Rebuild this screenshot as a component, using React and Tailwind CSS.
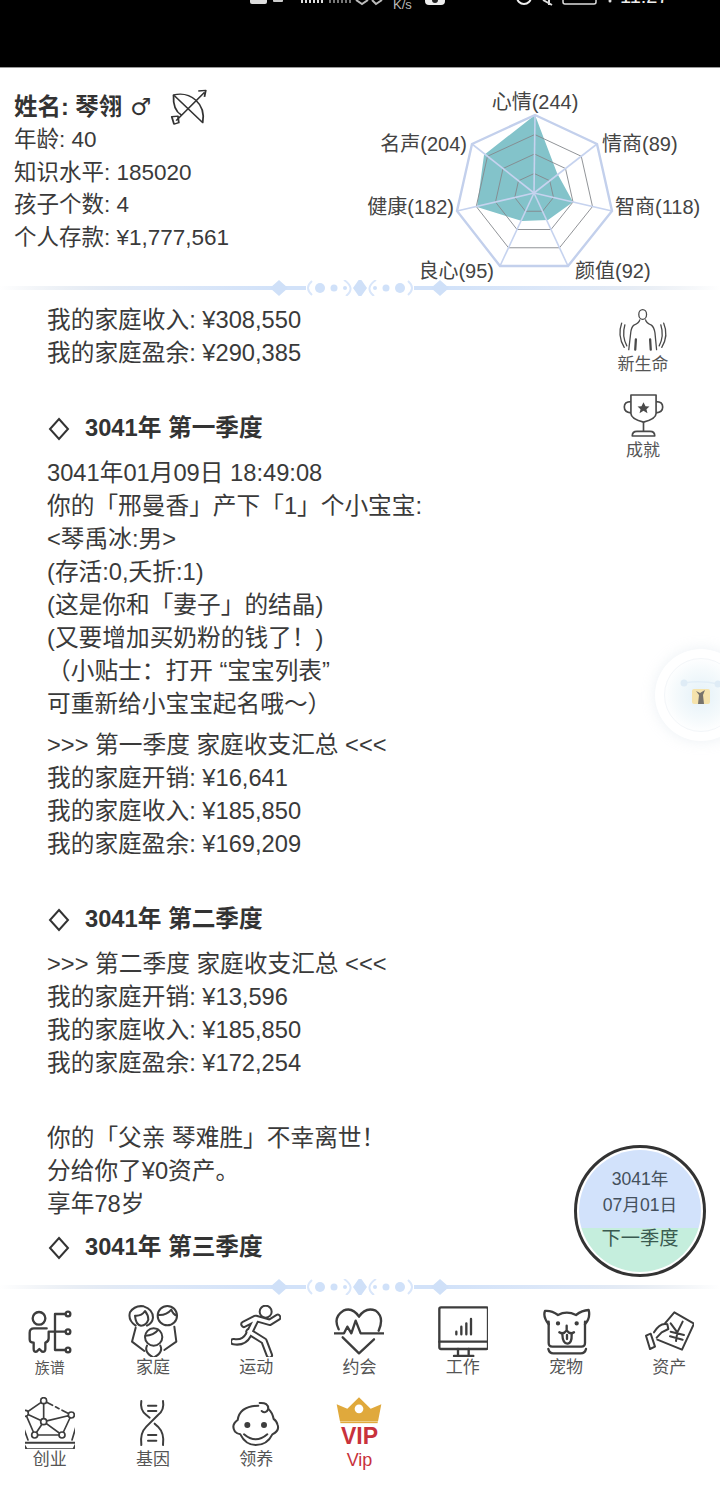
import React from 'react';

const LABELS = [
  { text: '心情(244)', x: 535, y: 109, anchor: 'middle' },
  { text: '情商(89)', x: 602, y: 151, anchor: 'start' },
  { text: '智商(118)', x: 615, y: 214, anchor: 'start' },
  { text: '颜值(92)', x: 575, y: 278, anchor: 'start' },
  { text: '良心(95)', x: 494, y: 278, anchor: 'end' },
  { text: '健康(182)', x: 454, y: 214, anchor: 'end' },
  { text: '名声(204)', x: 467, y: 151, anchor: 'end' },
];

const OUTER = [[535, 115], [597, 144], [612, 211], [568, 266], [500, 266], [457, 211], [472, 144]];
const CENTER = [534, 193];

const ringPoints = (k) =>
  OUTER.map(([x, y]) => `${CENTER[0] + (x - CENTER[0]) * k},${CENTER[1] + (y - CENTER[1]) * k}`).join(' ');

const Radar = () => (
  <svg viewBox="360 68 360 212" width="360" height="212" className="shrink-0 overflow-visible">
    <polygon points="535,115 557,173 573,202 548,220 522,221 477,207 484,155" fill="#83c3ca" />
    {[0.25, 0.5, 0.75].map((k) => (
      <polygon key={k} points={ringPoints(k)} fill="none" stroke="#85888c" strokeWidth="0.9" />
    ))}
    {OUTER.map(([x, y]) => (
      <line key={x} x1={CENTER[0]} y1={CENTER[1]} x2={x} y2={y} stroke="#c6d3ef" strokeWidth="1.6" />
    ))}
    <polygon points={ringPoints(1)} fill="none" stroke="#c3d0ec" strokeWidth="2.4" />
    {LABELS.map((l) => (
      <text key={l.text} x={l.x} y={l.y} textAnchor={l.anchor} fontSize="20" fill="#444">
        {l.text}
      </text>
    ))}
  </svg>
);

const Bracket = ({ flip }) => (
  <g transform={flip ? 'translate(720 0) scale(-1 1)' : undefined}>
    <circle cx="320" cy="8" r="5" fill="#d0e1f9" />
    <circle cx="334" cy="8" r="3.5" fill="#d0e1f9" />
    <circle cx="345" cy="8" r="2" fill="#d0e1f9" />
    <path d="M312 1 Q304 8 312 15" fill="none" stroke="#d9e6fa" strokeWidth="2" />
    <path d="M344 0 Q356 8 346 16" fill="none" stroke="#d9e6fa" strokeWidth="2" />
  </g>
);

const Divider = ({ id }) => (
  <svg viewBox="0 0 720 16" width="720" height="16" className="block shrink-0">
    <defs>
      <linearGradient id={id} gradientUnits="userSpaceOnUse" x1="0" x2="720" y1="0" y2="0">
        <stop offset="0" stopColor="#c9d3df" stopOpacity="0" />
        <stop offset="0.2" stopColor="#dfe9f8" />
        <stop offset="0.38" stopColor="#d2e2f9" />
        <stop offset="0.62" stopColor="#d2e2f9" />
        <stop offset="0.8" stopColor="#dfe9f8" />
        <stop offset="1" stopColor="#c9d3df" stopOpacity="0" />
      </linearGradient>
    </defs>
    <rect x="0" y="6" width="306" height="4" fill={`url(#${id})`} />
    <rect x="414" y="6" width="306" height="4" fill={`url(#${id})`} />
    <polygon points="279,0 288,8 279,16 270,8" fill="#cfe0f8" />
    <polygon points="440,0 449,8 440,16 431,8" fill="#cfe0f8" />
    <polygon points="360,-2 367,8 360,18 353,8" fill="#cfe0f8" />
    <Bracket />
    <Bracket flip />
  </svg>
);

// icons are drawn at 3x, so a 150x156 box comes out as 50x52
const Ico = ({ vb, w = 50, h = 52, sw = 7, children }) => (
  <svg
    viewBox={vb}
    width={w}
    height={h}
    fill="none"
    stroke="#3d3d3d"
    strokeWidth={sw}
    strokeLinecap="round"
    strokeLinejoin="round"
    className="block"
  >
    {children}
  </svg>
);

const FamilyTreeIcon = () => (
  <Ico vb="75 90 150 156">
    <circle cx="117" cy="130" r="19" />
    <path d="M140 160 H102 Q89 160 89 173 V193 Q89 203 101 203 V222 Q101 232 110 230 L118 222 L126 230 Q136 232 136 222 V203 Q146 200 146 190 V170 H165" />
    <path d="M165 117 V225 M165 117 H195 M165 170 H195 M165 225 H195" />
    <circle cx="204" cy="117" r="7" />
    <circle cx="204" cy="170" r="7" />
    <circle cx="204" cy="225" r="7" />
  </Ico>
);

const FamilyIcon = () => (
  <Ico vb="385 90 150 156" sw={6}>
    <path d="M408 152 Q384 135 391 112 Q405 90 432 94 Q460 103 460 128 Q458 145 442 152" />
    <path d="M406 122 Q425 124 436 108 Q446 120 446 134 Q440 152 424 152 Q408 150 406 122" />
    <circle cx="503" cy="122" r="29" />
    <path d="M475 120 Q500 122 515 104 Q520 118 531 122" />
    <circle cx="462" cy="186" r="26" />
    <path d="M437 182 Q462 182 476 164" />
    <path d="M408 158 L397 200 L434 228 M524 155 L530 200 L494 225" />
    <path d="M442 212 Q432 232 462 248 Q492 232 482 212" />
  </Ico>
);

const RunnerIcon = () => (
  <Ico vb="696 90 150 156" sw={6}>
    <circle cx="800" cy="110" r="18" />
    <g stroke="#3d3d3d" strokeWidth="22">
      <path d="M836 127 L812 142 L770 130 L735 148 M770 135 L748 180 Q735 205 704 200 M750 170 L795 198 L811 240" />
    </g>
    <g stroke="#fff" strokeWidth="10">
      <path d="M836 127 L812 142 L770 130 L735 148 M770 135 L748 180 Q735 205 704 200 M750 170 L795 198 L811 240" />
    </g>
  </Ico>
);

const HeartIcon = () => (
  <Ico vb="30 15 150 156">
    <path d="M44 88 Q26 52 58 32 Q85 20 105 50 Q125 20 155 32 Q182 52 164 92" />
    <path d="M56 112 L105 160 L150 118" />
    <path d="M28 100 H60 L70 80 L82 100 L95 62 L110 100 H183" />
  </Ico>
);

const MonitorIcon = () => (
  <Ico vb="234 90 150 156">
    <rect x="238" y="97" width="146" height="125" rx="5" />
    <path d="M238 200 H384 M294 222 V242 M326 222 V242 M282 243 H340" />
    <path d="M289 178 V170 M304 178 V155 M319 178 V145 M333 178 V132" />
  </Ico>
);

const DogIcon = () => (
  <Ico vb="543 90 150 156">
    <path d="M566 148 Q548 125 555 108 Q575 106 594 120 Q620 106 648 120 Q666 106 686 105 Q692 128 675 148" />
    <path d="M566 140 V204 Q566 215 577 215 H664 Q675 215 675 204 V140" />
    <path d="M565 222 Q568 235 580 235 H662 Q675 235 678 222" />
    <circle cx="594" cy="145" r="3" fill="#3d3d3d" />
    <circle cx="650" cy="145" r="3" fill="#3d3d3d" />
    <path d="M620 152 V166 M598 172 Q610 180 620 166 Q630 180 642 172" />
    <path d="M607 178 Q608 206 622 206 Q636 206 635 178 M621 180 V192" />
  </Ico>
);

const AssetIcon = () => (
  <Ico vb="852 90 150 156" sw={6}>
    <path d="M915 145 L943 112 L1002 146 L966 224 L892 194" />
    <path d="M932 145 L952 172 L968 140 M952 172 L948 198 M932 170 L972 180 M930 184 L968 194" />
    <path d="M882 172 Q900 142 922 148 L925 162 L905 172 L890 188" />
    <path d="M858 182 L872 176 L885 215 L870 222 Z" />
  </Ico>
);

const VentureIcon = () => (
  <Ico vb="49 21 150 156" sw={5}>
    <path d="M105 32 L50 70 L105 95 L188 75 M105 32 V95 M105 95 L78 135 M105 95 L160 135 M50 70 L78 135 H160 L188 75" />
    <path d="M105 32 L188 75" strokeDasharray="30 10 12 10" />
    {[[105, 32], [188, 75], [50, 70], [105, 95], [78, 135], [160, 135]].map(([x, y]) => (
      <circle key={x + y} cx={x} cy={y} r="9" fill="#fff" />
    ))}
    <path d="M40 100 L58 150 M205 100 L190 150" />
    <path d="M42 158 H204 L194 178 H54 Z" strokeWidth="6" />
  </Ico>
);

const DnaIcon = () => (
  <Ico vb="385 366 150 156" sw={6}>
    <path d="M425 378 Q420 405 440 420 L450 428 M490 378 Q495 405 475 420 L440 455 Q420 475 425 510" />
    <path d="M465 446 L475 455 Q495 475 490 510" />
    <path d="M445 392 H470 M445 408 H470 M445 480 H470 M445 497 H470" />
  </Ico>
);

const BabyIcon = () => (
  <Ico vb="696 366 150 156" sw={6}>
    <path d="M778 392 Q722 393 716 435 Q695 450 708 470 Q716 478 724 478 Q740 510 770 510 Q805 510 820 478 Q842 468 836 450 Q832 436 824 432 Q820 412 808 402" />
    <path d="M782 384 Q808 382 808 402 Q800 418 788 408" />
    <circle cx="745" cy="450" r="6" fill="#3d3d3d" />
    <circle cx="795" cy="450" r="6" fill="#3d3d3d" />
    <path d="M735 478 Q770 508 805 478" />
  </Ico>
);

const CrownIcon = () => (
  <svg viewBox="1005 375 150 80" width="50" height="27" className="block">
    <path d="M1013 396 L1045 410 L1080 375 L1115 410 L1147 396 L1137 448 H1023 Z" fill="#e0a93c" />
    <circle cx="1080" cy="410" r="13" fill="#fff" />
    <rect x="1024" y="449" width="112" height="4" fill="#e0a93c" />
  </svg>
);

const NAV = [
  { label: '族谱', icon: <FamilyTreeIcon />, size: 'text-[15px]' },
  { label: '家庭', icon: <FamilyIcon />, size: 'text-[17px]' },
  { label: '运动', icon: <RunnerIcon />, size: 'text-[17px]' },
  { label: '约会', icon: <HeartIcon />, size: 'text-[17px]' },
  { label: '工作', icon: <MonitorIcon />, size: 'text-[17px]' },
  { label: '宠物', icon: <DogIcon />, size: 'text-[17px]' },
  { label: '资产', icon: <AssetIcon />, size: 'text-[17px]' },
  { label: '创业', icon: <VentureIcon />, size: 'text-[17px]' },
  { label: '基因', icon: <DnaIcon />, size: 'text-[17px]' },
  { label: '领养', icon: <BabyIcon />, size: 'text-[17px]' },
];

const NavItem = ({ label, icon, size }) => (
  <div className="flex flex-col items-center">
    <div className="h-[54px]">{icon}</div>
    <span className={`${size} leading-[18px] text-[#555]`}>{label}</span>
  </div>
);

const Line = ({ children }) => <div className="h-[33px] leading-[33px]">{children}</div>;

const Heading = ({ children, className }) => (
  <div className={`flex items-center h-[33px] font-bold text-[#333] ${className}`}>
    <svg viewBox="0 0 22 24" width="22" height="24" className="mr-[15px] ml-px shrink-0">
      <polygon points="11,2 20,12 11,22 2,12" fill="none" stroke="#333" strokeWidth="2" />
    </svg>
    {children}
  </div>
);

const StatusStrip = () => (
  <svg viewBox="0 0 720 14" width="720" height="14" className="block">
    <rect x="250" y="-4" width="17" height="8" rx="2" fill="#ddd" />
    <rect x="273" y="-4" width="10" height="6" rx="1" fill="#ccc" />
    <path d="M302 0 V3 M306 0 V3 M310 0 V3 M314 0 V3 M318 0 V3 M322 0 V3" stroke="#ddd" strokeWidth="2" />
    <path d="M330 0 V3 M334 0 V3 M338 0 V3 M342 0 V3 M346 0 V3 M350 0 V3" stroke="#777" strokeWidth="2" />
    <path d="M356 0 L362 4 L368 0 M372 0 L376 4 L382 0" stroke="#bbb" strokeWidth="2" fill="none" />
    <text x="393" y="9" fontSize="13" fill="#bbb">K/s</text>
    <rect x="425" y="-6" width="20" height="11" rx="4" fill="#eee" />
    <circle cx="435" cy="0" r="3" fill="#222" />
    <circle cx="524" cy="-3" r="7" fill="none" stroke="#eee" strokeWidth="2" />
    <path d="M543 0 L552 5 M549 0 V5" stroke="#ddd" strokeWidth="2" />
    <rect x="563" y="-8" width="33" height="12" rx="2" fill="none" stroke="#ddd" strokeWidth="1.5" />
    <circle cx="610" cy="1" r="1.5" fill="#ddd" />
    <text x="620" y="3" fontSize="20" fill="#eee">11:27</text>
  </svg>
);

const BowIcon = () => (
  <svg viewBox="366 266 86 112" width="38" height="37" preserveAspectRatio="none" fill="none" stroke="#333" strokeWidth="4" strokeLinejoin="round" className="ml-[19px] shrink-0">
    <path d="M374 284 C412 272 448 310 440 368 Z" />
    <path d="M374 284 Q372 330 392 345" />
    <path d="M380 362 L444 276 M430 272 L447 270 L444 290" />
    <path d="M370 350 L384 348 L386 368 L375 372 Z" />
  </svg>
);

const BirthIcon = () => (
  <svg viewBox="76 30 164 136" width="54" height="44" fill="none" stroke="#4a4a4a" strokeWidth="4" strokeLinecap="round">
    <ellipse cx="157" cy="53" rx="12" ry="15" />
    <path d="M148 70 Q146 80 130 86 Q122 92 120 110 L114 162 M166 70 Q168 80 184 86 Q192 92 195 110 L200 162" />
    <path d="M134 162 L136 130 M180 130 L182 162" strokeWidth="7" />
    <path d="M102 85 Q92 120 108 150 M92 80 Q78 118 100 155 M213 85 Q224 120 208 150 M222 80 Q238 118 216 155" />
  </svg>
);

const TrophyIcon = () => (
  <svg viewBox="92 290 136 136" width="45" height="45" fill="none" stroke="#4a4a4a" strokeWidth="5" strokeLinejoin="round">
    <path d="M122 296 H198 V352 Q198 368 160 378 Q122 368 122 352 Z" />
    <path d="M122 316 Q102 316 102 332 Q102 348 122 350 M198 316 Q218 316 218 332 Q218 348 198 350" />
    <path d="M160 378 V405 M126 420 Q126 406 140 406 H180 Q194 406 194 420 Z" />
    <polygon points="160,318 166,330 178,331 169,339 172,351 160,344 148,351 151,339 142,331 154,330" fill="#4a4a4a" stroke="none" />
  </svg>
);

const SideAction = ({ icon, label }) => (
  <div className="flex flex-col items-center">
    <div className="flex h-[44px] items-center">{icon}</div>
    <span className="mt-1 text-[17px] leading-5 text-[#555]">{label}</span>
  </div>
);

export default function App() {
  return (
    <div className="relative flex h-[1485px] w-[720px] flex-col overflow-hidden bg-white text-[#3a3a3a] [font-family:'Liberation_Sans','Noto_Sans_CJK_SC',sans-serif]">
      <div className="h-[68px] shrink-0 border-b border-[#999] bg-black">
        <StatusStrip />
      </div>

      <div className="flex h-[212px] shrink-0 justify-between">
        <div className="pl-[14px] pt-[23px] text-[22.5px] leading-[32.7px]">
          <div className="flex h-[33px] items-center text-[23.5px] font-bold text-[#333]">
            姓名: 琴翎 <span className="ml-2 [font-family:'DejaVu_Sans']">♂</span>
            <BowIcon />
          </div>
          <div>年龄: 40</div>
          <div>知识水平: 185020</div>
          <div>孩子个数: 4</div>
          <div>个人存款: ¥1,777,561</div>
        </div>
        <Radar />
      </div>

      <Divider id="fade-top" />

      <div className="relative h-[983px] shrink-0 pl-[47px] pt-2 text-[23.7px]">
        <Line>我的家庭收入: ¥308,550</Line>
        <Line>我的家庭盈余: ¥290,385</Line>

        <Heading className="mt-[42px]">3041年 第一季度</Heading>
        <div className="mt-3">
          <Line>3041年01月09日 18:49:08</Line>
          <Line>你的「邢曼香」产下「1」个小宝宝:</Line>
          <Line>{'<琴禹冰:男>'}</Line>
          <Line>(存活:0,夭折:1)</Line>
          <Line>(这是你和「妻子」的结晶)</Line>
          <Line>(又要增加买奶粉的钱了！)</Line>
          <Line>（小贴士：打开 “宝宝列表”</Line>
          <Line>可重新给小宝宝起名哦～）</Line>
        </div>
        <div className="mt-2">
          <Line>{'>>> 第一季度 家庭收支汇总 <<<'}</Line>
          <Line>我的家庭开销: ¥16,641</Line>
          <Line>我的家庭收入: ¥185,850</Line>
          <Line>我的家庭盈余: ¥169,209</Line>
        </div>

        <Heading className="mt-[42px]">3041年 第二季度</Heading>
        <div className="mt-3">
          <Line>{'>>> 第二季度 家庭收支汇总 <<<'}</Line>
          <Line>我的家庭开销: ¥13,596</Line>
          <Line>我的家庭收入: ¥185,850</Line>
          <Line>我的家庭盈余: ¥172,254</Line>
        </div>
        <div className="mt-[42px]">
          <Line>你的「父亲 琴难胜」不幸离世！</Line>
          <Line>分给你了¥0资产。</Line>
          <Line>享年78岁</Line>
        </div>

        <Heading className="mt-[10px]">3041年 第三季度</Heading>

        <div className="absolute right-[37px] top-[11px] flex w-20 flex-col items-center gap-[18px]">
          <SideAction icon={<BirthIcon />} label="新生命" />
          <SideAction icon={<TrophyIcon />} label="成就" />
        </div>

        {/* floating helper ball */}
        <div className="absolute left-[655px] top-[353px] flex h-[92px] w-[92px] items-center justify-center rounded-full bg-white shadow-[0_0_14px_rgba(190,205,220,0.3)]">
          <div className="flex h-[74px] w-[74px] items-center justify-center rounded-full border border-[#f3f6f9] bg-[radial-gradient(circle,#e4f1f8_0%,#f5fafc_50%,#ffffff_75%)]">
            <svg viewBox="0 0 50 40" width="50" height="40">
              <path d="M8 8 Q25 5 42 9" stroke="#e2eef7" strokeWidth="1.5" fill="none" />
              <circle cx="8" cy="8" r="3.5" fill="#dfecf6" />
              <circle cx="42" cy="9" r="3.5" fill="#dfecf6" />
              <rect x="16" y="14" width="18" height="15" rx="2" fill="#f5e3ac" />
              <path d="M22 29 L23 20 L20 16 L24 18 L29 15 L27 20 L28 29 Z" fill="#77736c" />
            </svg>
          </div>
        </div>

        {/* next quarter button */}
        <div className="absolute left-[574px] top-[849px] h-[132px] w-[132px] rounded-full border-[3px] border-[#333] bg-white p-[2px]">
          <div className="flex h-full w-full flex-col overflow-hidden rounded-full text-center text-[#44505c]">
            <div className="h-[78px] bg-[#d2e2fb] pt-[16px] text-[17.6px] leading-[26px]">
              <div>3041年</div>
              <div>07月01日</div>
            </div>
            <div className="flex-1 bg-[#c5eedd] text-[19.3px] leading-[22px] text-[#3a5a50]">下一季度</div>
          </div>
        </div>
      </div>

      <Divider id="fade-bottom" />

      <div className="-ml-[2px] grid w-[723px] shrink-0 grid-cols-7 gap-y-[20px] pt-[10px]">
        {NAV.map((item) => (
          <NavItem key={item.label} {...item} />
        ))}
        <div className="flex flex-col items-center">
          <div className="flex h-[54px] flex-col items-center">
            <CrownIcon />
            <span className="text-[23px] font-bold leading-[25px] text-[#c8323c]">VIP</span>
          </div>
          <span className="text-[18px] leading-[18px] text-[#c8323c]">Vip</span>
        </div>
      </div>
    </div>
  );
}
